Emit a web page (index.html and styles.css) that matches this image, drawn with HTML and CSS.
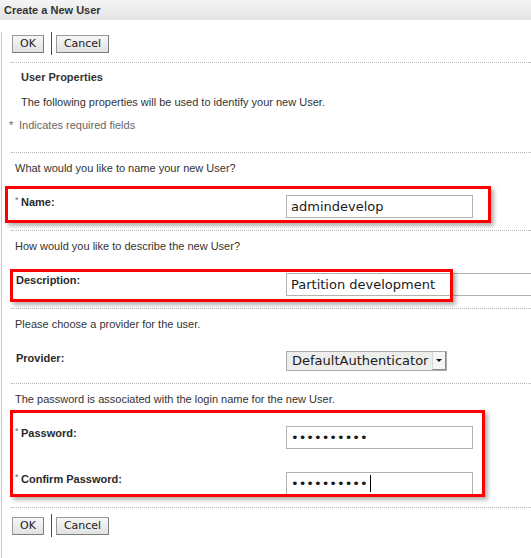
FILE: index.html
```html
<!DOCTYPE html>
<html lang="en">
<head>
<meta charset="utf-8">
<title>Create a New User</title>
<link rel="stylesheet" href="styles.css">
</head>
<body>
<div class="page">
  <div class="header">Create a New User</div>
  <div class="main">
    <div class="toolbar toolbar-top">
      <button class="btn" type="button">OK</button>
      <span class="divider"></span>
      <button class="btn" type="button">Cancel</button>
    </div>

    <div class="section intro">
      <div class="intro-title">User Properties</div>
      <p class="intro-text">The following properties will be used to identify your new User.</p>
      <p class="required-note"><span class="note-star">*</span>Indicates required fields</p>
    </div>

    <div class="section">
      <p class="question">What would you like to name your new User?</p>
      <div class="row">
        <label class="label"><span class="req">*</span>Name:</label>
        <div class="field"><input class="text-input" type="text" value="admindevelop"></div>
      </div>
    </div>

    <div class="section">
      <p class="question">How would you like to describe the new User?</p>
      <div class="row">
        <label class="label">Description:</label>
        <div class="field"><input class="text-input wide" type="text" value="Partition development"></div>
      </div>
    </div>

    <div class="section">
      <p class="question">Please choose a provider for the user.</p>
      <div class="row">
        <label class="label">Provider:</label>
        <div class="field">
          <div class="select">
            <span class="select-value">DefaultAuthenticator</span>
            <span class="select-btn"><span class="arrow"></span></span>
          </div>
        </div>
      </div>
    </div>

    <div class="section">
      <p class="question">The password is associated with the login name for the new User.</p>
      <div class="row">
        <label class="label"><span class="req">*</span>Password:</label>
        <div class="field"><input class="text-input" type="password" value="abcdefghij"></div>
      </div>
      <div class="row">
        <label class="label"><span class="req">*</span>Confirm Password:</label>
        <div class="field caret-wrap"><input class="text-input" type="password" value="abcdefghij"><span class="caret"></span></div>
      </div>
    </div>

    <div class="section actions">
      <div class="toolbar toolbar-bottom">
        <button class="btn" type="button">OK</button>
        <span class="divider"></span>
        <button class="btn" type="button">Cancel</button>
      </div>
    </div>
  </div>

  <div class="highlight hl-name"></div>
  <div class="highlight hl-desc"></div>
  <div class="highlight hl-password"></div>
</div>
</body>
</html>
```

FILE: styles.css
```css
* {
  box-sizing: border-box;
}

html,
body {
  margin: 0;
  padding: 0;
}

body {
  font-family: "Liberation Sans", Arial, sans-serif;
  font-size: 11px;
  color: #333;
  background: #fff;
  overflow: hidden;
}

.page {
  position: relative;
  width: 531px;
  height: 558px;
  overflow: hidden;
}

.header {
  height: 20px;
  line-height: 20px;
  padding-left: 4px;
  font-weight: bold;
  color: #333;
  background: linear-gradient(#f5f5f5, #e3e3e3);
}

.main {
  margin-left: 1px;
  border-left: 1px solid #cbcbcb;
  height: 538px;
}

.toolbar {
  display: flex;
  align-items: center;
  height: 23px;
}

.toolbar-top {
  margin: 12px 0 7px 10px;
}

.toolbar-bottom {
  margin: 6px 0 0 1px;
}

.btn {
  font-family: "DejaVu Sans", sans-serif;
  font-size: 11px;
  height: 18px;
  line-height: 16px;
  margin: 0;
  padding: 0 7px;
  color: #222;
  border: 1px solid #9a9a9a;
  border-right-color: #7c7c7c;
  border-bottom-color: #7c7c7c;
  border-radius: 0;
  background: linear-gradient(#f6f6f6, #e2e2e2);
}

.divider {
  width: 1px;
  height: 23px;
  background: #4a4a4a;
  margin: 0 4px 0 7px;
}

.section {
  margin-left: 9px;
  border-top: 1px dotted #b8b8b8;
  padding: 7px 0 12px 4px;
}

.intro {
  padding: 6px 0 19px 0;
}

.actions {
  padding: 0;
}

.intro-title {
  margin-left: 10px;
  line-height: 16px;
  font-weight: bold;
}

.intro-text {
  margin: 9px 0 0 10px;
  line-height: 16px;
}

.required-note {
  margin: 7px 0 0 -2px;
  line-height: 16px;
  color: #666;
}

.note-star {
  display: inline-block;
  width: 10px;
}

.question {
  margin: 0;
  line-height: 16px;
}

.row {
  display: grid;
  grid-template-columns: 271px auto;
  align-items: start;
  margin-top: 19px;
}

.row + .row {
  margin-top: 23px;
}

.label {
  padding-left: 1px;
  line-height: 14px;
  font-weight: bold;
  color: #2a2a2a;
}

.req {
  display: inline-block;
  width: 6px;
  margin-left: -1px;
  font-size: 9px;
  line-height: 10px;
  font-weight: normal;
  color: #666;
  vertical-align: top;
}

.field {
  display: flex;
}

.text-input {
  display: block;
  width: 187px;
  height: 23px;
  margin: 0;
  padding: 0 4px;
  font-family: "DejaVu Sans", sans-serif;
  font-size: 13px;
  color: #1a1a1a;
  background: #fff;
  border: 1px solid #b3b3ad;
  border-radius: 0;
  outline: none;
}

.text-input.wide {
  width: 260px;
}

.select {
  display: flex;
  width: 161px;
  height: 20px;
  border: 1px solid #ababab;
  background: #ededeb;
  font-family: "DejaVu Sans", sans-serif;
  font-size: 13px;
  color: #1a1a1a;
}

.select-value {
  flex: 1;
  padding-left: 5px;
  line-height: 18px;
  white-space: nowrap;
}

.select-btn {
  display: flex;
  align-items: center;
  justify-content: center;
  width: 14px;
  background: #f6f6f4;
  border-left: 1px solid #d8d8d8;
  border-right: 1px solid #8a8a8a;
  border-bottom: 1px solid #8a8a8a;
}

.arrow {
  width: 0;
  height: 0;
  border-left: 3px solid transparent;
  border-right: 3px solid transparent;
  border-top: 3px solid #111;
}

.caret-wrap {
  position: relative;
}

.caret {
  position: absolute;
  left: 84px;
  top: 3px;
  width: 1px;
  height: 17px;
  background: #000;
}

.highlight {
  position: absolute;
  border: 3px solid #f00;
  box-shadow: 3px 3px 4px rgba(0, 0, 0, 0.3);
  pointer-events: none;
}

.hl-name {
  left: 5px;
  top: 186px;
  width: 486px;
  height: 37px;
}

.hl-desc {
  left: 10px;
  top: 269px;
  width: 443px;
  height: 33px;
}

.hl-password {
  left: 10px;
  top: 410px;
  width: 475px;
  height: 87px;
}
```
